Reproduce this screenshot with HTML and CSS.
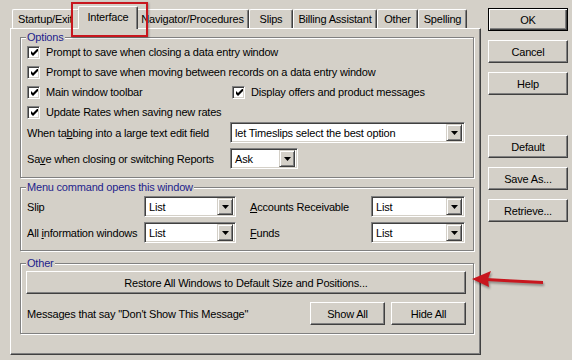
FILE: index.html
```html
<!DOCTYPE html>
<html lang="en">
<head>
  <meta charset="UTF-8">
  <title>Preferences</title>
  <link rel="stylesheet" href="styles.css">
</head>
<body>
  <div class="dialog">
    <div class="sheet">
      <div class="tabs">
        <div class="tab tab-startup">Startup/Exit</div>
        <div class="tab active">Interface</div>
        <div class="tab tab-nav">Navigator/Procedures</div>
        <div class="tab tab-slips">Slips</div>
        <div class="tab tab-billing">Billing Assistant</div>
        <div class="tab tab-other">Other</div>
        <div class="tab tab-spelling">Spelling</div>
      </div>

      <div class="panel">
        <fieldset class="group group-options">
          <legend>Options</legend>
          <div class="check-row">
            <span class="check"><svg width="7" height="7" viewBox="0 0 7 7"><polygon points="0,2 2,4 6,0 7,0 7,2 2,7 0,5"/></svg></span>
            Prompt to save when closing a data entry window
          </div>
          <div class="check-row">
            <span class="check"><svg width="7" height="7" viewBox="0 0 7 7"><polygon points="0,2 2,4 6,0 7,0 7,2 2,7 0,5"/></svg></span>
            Prompt to save when moving between records on a data entry window
          </div>
          <div class="check-row">
            <div class="check-col">
              <span class="check"><svg width="7" height="7" viewBox="0 0 7 7"><polygon points="0,2 2,4 6,0 7,0 7,2 2,7 0,5"/></svg></span>
              Main window toolbar
            </div>
            <div class="check-col">
              <span class="check"><svg width="7" height="7" viewBox="0 0 7 7"><polygon points="0,2 2,4 6,0 7,0 7,2 2,7 0,5"/></svg></span>
              Display offers and product messages
            </div>
          </div>
          <div class="check-row">
            <span class="check"><svg width="7" height="7" viewBox="0 0 7 7"><polygon points="0,2 2,4 6,0 7,0 7,2 2,7 0,5"/></svg></span>
            Update Rates when saving new rates
          </div>
          <div class="field-row first">
            <span class="field-label">When ta<u>b</u>bing into a large text edit field</span>
            <div class="select select-wide">
              <span class="select-value">let Timeslips select the best option</span>
              <span class="select-arrow"><svg width="7" height="4" viewBox="0 0 7 4"><polygon points="0,0 7,0 3.5,4"/></svg></span>
            </div>
          </div>
          <div class="field-row">
            <span class="field-label">Sa<u>v</u>e when closing or switching Reports</span>
            <div class="select select-ask">
              <span class="select-value">Ask</span>
              <span class="select-arrow"><svg width="7" height="4" viewBox="0 0 7 4"><polygon points="0,0 7,0 3.5,4"/></svg></span>
            </div>
          </div>
        </fieldset>

        <fieldset class="group group-menu">
          <legend>Menu command opens this window</legend>
          <div class="menu-grid">
            <span>Slip</span>
            <div class="select">
              <span class="select-value">List</span>
              <span class="select-arrow"><svg width="7" height="4" viewBox="0 0 7 4"><polygon points="0,0 7,0 3.5,4"/></svg></span>
            </div>
            <span class="menu-label"><u>A</u>ccounts Receivable</span>
            <div class="select">
              <span class="select-value">List</span>
              <span class="select-arrow"><svg width="7" height="4" viewBox="0 0 7 4"><polygon points="0,0 7,0 3.5,4"/></svg></span>
            </div>

            <span>All <u>i</u>nformation windows</span>
            <div class="select">
              <span class="select-value">List</span>
              <span class="select-arrow"><svg width="7" height="4" viewBox="0 0 7 4"><polygon points="0,0 7,0 3.5,4"/></svg></span>
            </div>
            <span class="menu-label"><u>F</u>unds</span>
            <div class="select">
              <span class="select-value">List</span>
              <span class="select-arrow"><svg width="7" height="4" viewBox="0 0 7 4"><polygon points="0,0 7,0 3.5,4"/></svg></span>
            </div>
          </div>
        </fieldset>

        <fieldset class="group group-other">
          <legend>Other</legend>
          <button class="btn btn-restore">Restore All Windows to Default Size and Positions...</button>
          <div class="messages-row">
            <span class="messages-text">Messages that say "Don't Show This Message"</span>
            <button class="btn btn-small">Show All</button>
            <button class="btn btn-small">Hide All</button>
          </div>
        </fieldset>
      </div>
    </div>

    <div class="side">
      <button class="btn btn-default">OK</button>
      <button class="btn">Cancel</button>
      <button class="btn">Help</button>
      <button class="btn btn-gap">Default</button>
      <button class="btn">Save As...</button>
      <button class="btn">Retrieve...</button>
    </div>

    <div class="callout-box"></div>
    <svg class="callout-arrow" width="84" height="26" viewBox="0 0 84 26">
      <polygon points="6,13 25,5 22,13 23,21" />
      <polygon points="20,12 77,15 77,18 20,15" />
    </svg>
  </div>
</body>
</html>
```

FILE: styles.css
```css
:root {
  --face: #d4d0c8;
  --shadow: #808080;
  --dark: #404040;
  --light: #fff;
  --legend: #1e1e8c;
  --mark: #c8161e;
}

body {
  margin: 0;
  background: var(--face);
  font-family: 'Liberation Sans', Arial, sans-serif;
  font-size: 11px;
  letter-spacing: -0.2px;
  color: #000;
}

.dialog {
  position: relative;
  display: flex;
  width: 572px;
  height: 360px;
  padding-left: 10px;
  box-sizing: border-box;
}

.sheet {
  width: 471px;
  display: flex;
  flex-direction: column;
}

/* tab strip */
.tabs {
  display: flex;
  align-items: flex-end;
  height: 22px;
  margin-top: 6px;
  padding-left: 2px;
  position: relative;
  z-index: 1;
}

.tab {
  box-sizing: border-box;
  height: 19px;
  display: flex;
  align-items: center;
  justify-content: center;
  border-top: 1px solid var(--light);
  border-left: 1px solid var(--light);
  border-right: 1px solid var(--dark);
  border-radius: 2px 2px 0 0;
  box-shadow: inset -1px 0 var(--shadow);
  white-space: nowrap;
  overflow: hidden;
  padding-bottom: 1px;
}

.tab-startup { width: 68px; justify-content: flex-start; padding-left: 5px; }
.tab-nav { width: 113px; }
.tab-slips { width: 44px; }
.tab-billing { width: 84px; }
.tab-other { width: 41px; }
.tab-spelling { width: 49px; }

.tab.active {
  width: 60px;
  height: 23px;
  margin: 0 -2px -1px;
  padding-bottom: 3px;
  background: var(--face);
  position: relative;
  z-index: 2;
}

/* page */
.panel {
  box-sizing: border-box;
  height: 327px;
  border: 1px solid;
  border-color: var(--light) var(--dark) var(--dark) var(--light);
  box-shadow: inset -1px -1px var(--shadow);
  padding: 2px 6px 0 9px;
}

.group {
  margin: 0;
  padding: 0 8px 8px 6px;
  min-width: 0;
  border: 1px solid var(--shadow);
  box-shadow: inset 1px 1px var(--light), 1px 1px var(--light);
}

.group legend {
  padding: 0 1px;
  margin-left: -1px;
  line-height: 13px;
  color: var(--legend);
  background: var(--face);
}

.group-menu { margin-top: 3px; padding-bottom: 7px; }
.group-other { margin-top: 6px; }

.check-row {
  display: flex;
  align-items: center;
  height: 16px;
  margin-bottom: 4px;
  white-space: nowrap;
}

.check-col {
  display: flex;
  align-items: center;
}

.check-col:first-child { width: 205px; }

.check {
  box-sizing: border-box;
  width: 13px;
  height: 13px;
  margin-right: 6px;
  display: flex;
  align-items: center;
  justify-content: center;
  border: 1px solid;
  border-color: var(--shadow) var(--light) var(--light) var(--shadow);
  box-shadow: inset 1px 1px var(--dark), inset -1px -1px var(--face);
  background: #fff;
}

.check svg { margin: 1px 0 0 1px; }

.field-row {
  display: flex;
  align-items: center;
  margin-top: 5px;
}

.field-row.first { margin-top: -2px; }

.field-label { width: 203px; white-space: nowrap; }

/* fake combo box */
.select {
  box-sizing: border-box;
  height: 21px;
  display: flex;
  align-items: center;
  border: 1px solid;
  border-color: var(--shadow) var(--light) var(--light) var(--shadow);
  box-shadow: inset 1px 1px var(--dark), inset -1px -1px var(--face);
  background: #fff;
  padding: 2px;
}

.select-wide { width: 235px; }
.select-ask { width: 68px; }

.select-value {
  flex: 1;
  padding-left: 2px;
  white-space: nowrap;
}

.select-arrow {
  box-sizing: border-box;
  width: 16px;
  height: 17px;
  display: flex;
  align-items: center;
  justify-content: center;
  background: var(--face);
  border: 1px solid;
  border-color: var(--face) var(--dark) var(--dark) var(--face);
  box-shadow: inset 1px 1px var(--light), inset -1px -1px var(--shadow);
}

.menu-grid {
  display: grid;
  grid-template-columns: 117px 92px 135px 94px;
  row-gap: 5px;
  align-items: center;
  margin-top: 2px;
  white-space: nowrap;
}

.menu-label { padding-left: 14px; }

/* buttons */
.btn {
  box-sizing: border-box;
  height: 23px;
  padding: 0;
  font: inherit;
  letter-spacing: inherit;
  color: #000;
  background: var(--face);
  border: 1px solid;
  border-color: var(--light) var(--dark) var(--dark) var(--light);
  box-shadow: inset -1px -1px var(--shadow);
}

.btn-restore {
  display: block;
  width: 440px;
  margin: 1px -1px 0;
}

.messages-row {
  display: flex;
  align-items: center;
  margin-top: 8px;
}

.messages-text { flex: 1; white-space: nowrap; }

.btn-small { width: 75px; margin-left: 6px; }
.messages-row .btn-small:last-child { margin-right: -1px; }

.side {
  width: 80px;
  margin-left: 7px;
  padding-top: 8px;
  display: flex;
  flex-direction: column;
  gap: 9px;
}

.btn-default {
  border-color: #000;
  box-shadow: inset 1px 1px var(--light), inset -1px -1px var(--dark), inset -2px -2px var(--shadow);
}

.btn-gap { margin-top: 31px; }

/* red annotation drawn over the screenshot */
.callout-box {
  position: absolute;
  left: 71px;
  top: 2px;
  width: 77px;
  height: 35px;
  box-sizing: border-box;
  border: 2px solid var(--mark);
  box-shadow: 1px 1px 2px rgba(0,0,0,0.3);
  z-index: 5;
}

.callout-arrow {
  position: absolute;
  left: 466px;
  top: 266px;
  fill: var(--mark);
  filter: drop-shadow(1px 2px 1px rgba(0,0,0,0.35));
  z-index: 5;
}
```
